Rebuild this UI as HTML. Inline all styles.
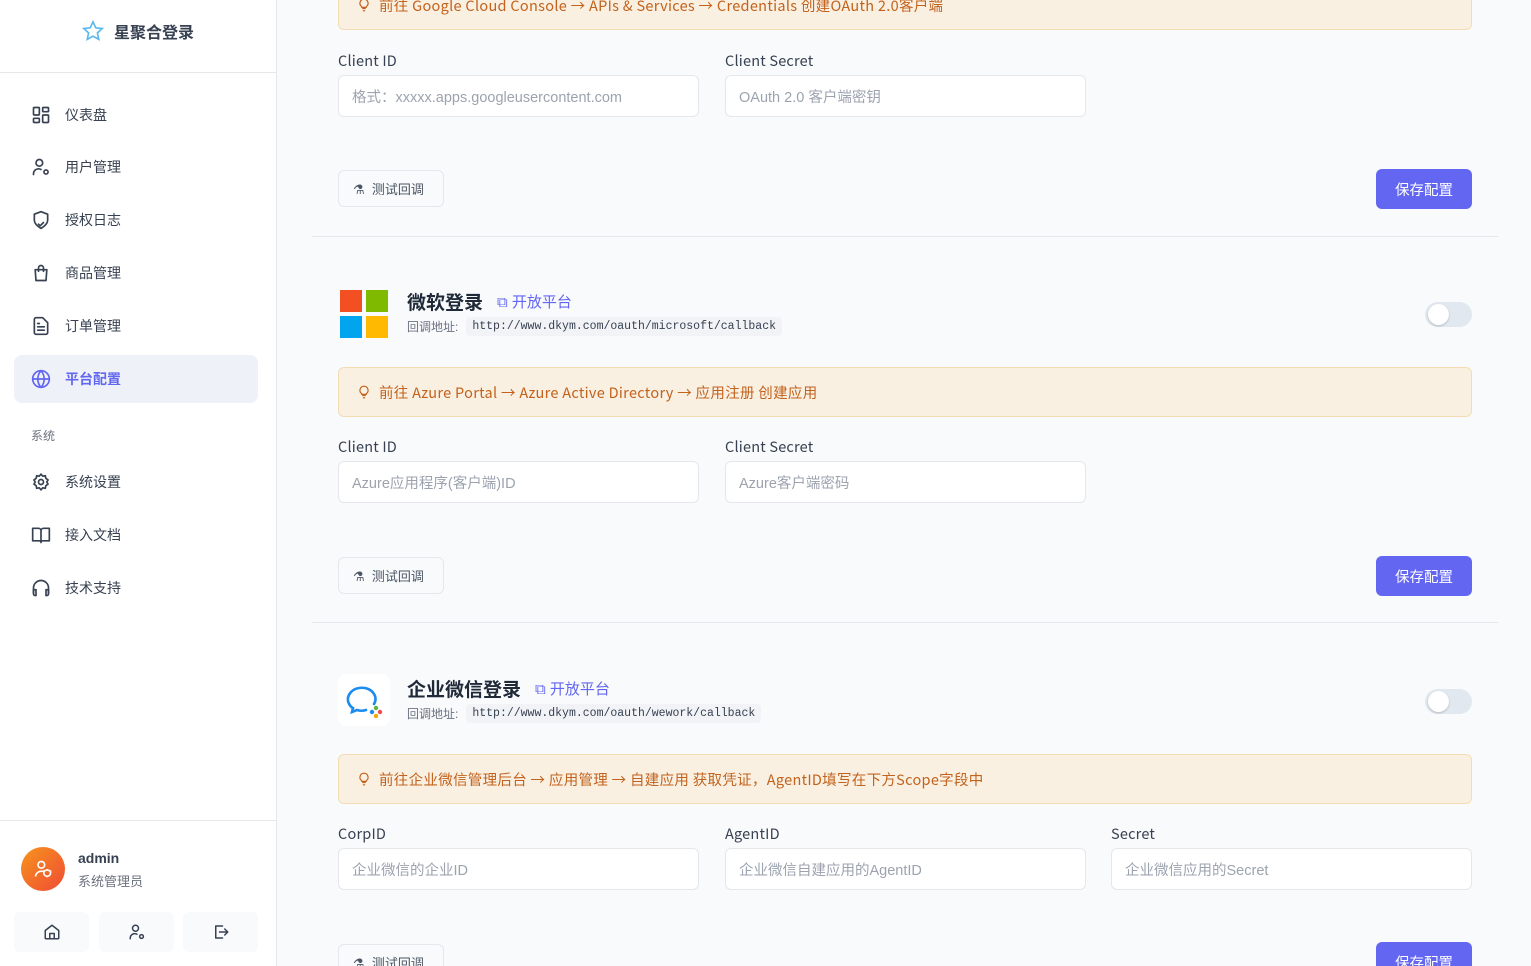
<!DOCTYPE html>
<html><head><meta charset="utf-8">
<style>
*{box-sizing:border-box;margin:0;padding:0}
html{width:1531px;height:966px;overflow:hidden}
body{width:1531px;height:966px;overflow:hidden;background:#f8fafc;font-family:"Liberation Sans","Noto Sans CJK SC",sans-serif;position:relative;color:#374151}
.a{position:absolute}
.side{left:0;top:0;width:277px;height:966px;background:#fff;border-right:1px solid #e5e7eb}
.nav{left:14px;width:244px;height:48px;display:flex;align-items:center;padding-left:17px;font-size:14px;color:#374151}
.nav svg{width:20px;height:20px;margin-right:14px;stroke:#374151;fill:none;stroke-width:2;stroke-linecap:round;stroke-linejoin:round}
.nav.act{background:#eef2f8;border-radius:8px;color:#6366f1;font-weight:bold}
.nav.act svg{stroke:#6366f1}
.lbl{font-family:"Noto Sans CJK SC",sans-serif;font-size:14.5px;color:#374151;letter-spacing:.2px}
.inp{height:42px;background:#fff;border:1px solid #e5e7eb;border-radius:6px;font-size:14.5px;color:#9ca3af;padding-left:13px;display:flex;align-items:center}
.alert{left:338px;width:1134px;height:50px;background:#faf0e2;border:1px solid #f3dcb4;border-radius:6px;font-family:"Noto Sans CJK SC",sans-serif;font-size:14.5px;color:#c2621c;display:flex;align-items:center;padding-left:18px;letter-spacing:.3px}
.alert svg{margin-right:8px}
.tbtn{left:338px;width:106px;height:37px;border:1px solid #e5e7eb;border-radius:6px;background:#f8fafc;font-size:13px;color:#4b5563;display:flex;align-items:center;padding-left:14px}
.sbtn{left:1376px;width:96px;height:40px;background:#6366f1;border-radius:6px;color:#fff;font-size:14.5px;display:flex;align-items:center;justify-content:center}
.hr{left:312px;width:1186px;height:1px;background:#e5e7eb}
.title{font-size:19px;font-weight:bold;color:#1f2937}
.link{font-size:15px;color:#6366f1}
.cb{font-size:12px;color:#6b7280;display:flex;align-items:center}
.cb code{font-family:"Liberation Mono",monospace;font-size:11.5px;color:#374151;background:#f1f3f7;border-radius:4px;padding:3px 6px;margin-left:8px}
.tog{left:1425px;width:47px;height:25px;border-radius:13px;background:#e2e8f0}
.tog:after{content:"";position:absolute;left:3px;top:2px;width:21px;height:21px;border-radius:50%;background:#fff;box-shadow:0 1px 2px rgba(0,0,0,.2)}
.bb{width:75px;height:40px;background:#f8fafc;border-radius:6px;top:912px;display:flex;align-items:center;justify-content:center}
.bb svg{width:18px;height:18px;fill:none;stroke:#374151;stroke-width:2;stroke-linecap:round;stroke-linejoin:round}
</style></head><body>
<div class="a side">
  <div class="a" style="left:82px;top:19px;display:flex;align-items:center">
    <svg width="22" height="22" viewBox="0 0 24 24" fill="none" stroke="#5ab8ee" stroke-width="1.8"><path d="M12 2l3 6.5 7 .8-5.2 4.8 1.5 7L12 17.6 5.7 21.1l1.5-7L2 9.3l7-.8z"/></svg>
    <span style="margin-left:10px;font-size:16px;font-weight:bold;color:#374151">星聚合登录</span>
  </div>
  <div class="a" style="left:0;top:72px;width:277px;height:1px;background:#e5e7eb"></div>
  <div class="a nav" style="top:91px"><svg viewBox="0 0 24 24"><rect x="3" y="3" width="7" height="9" rx="1"/><rect x="14" y="3" width="7" height="5" rx="1"/><rect x="14" y="12" width="7" height="9" rx="1"/><rect x="3" y="16" width="7" height="5" rx="1"/></svg>仪表盘</div>
  <div class="a nav" style="top:143px"><svg viewBox="0 0 24 24"><circle cx="10" cy="7" r="4"/><path d="M3 21v-1a6 6 0 0 1 9-5"/><circle cx="18" cy="18" r="2.5"/></svg>用户管理</div>
  <div class="a nav" style="top:196px"><svg viewBox="0 0 24 24"><path d="M12 22s8-4 8-10V5l-8-3-8 3v7c0 6 8 10 8 10"/><path d="M9 17l2 2 4-4"/></svg>授权日志</div>
  <div class="a nav" style="top:249px"><svg viewBox="0 0 24 24"><path d="M5 8h14l-1 13H6z"/><path d="M9 10V6a3 3 0 0 1 6 0v4"/></svg>商品管理</div>
  <div class="a nav" style="top:302px"><svg viewBox="0 0 24 24"><path d="M14 2H6a2 2 0 0 0-2 2v16a2 2 0 0 0 2 2h12a2 2 0 0 0 2-2V8z"/><path d="M8 13h8M8 17h8M8 9h2"/></svg>订单管理</div>
  <div class="a nav act" style="top:355px"><svg viewBox="0 0 24 24"><circle cx="12" cy="12" r="10"/><path d="M2 12h20M12 2a15 15 0 0 1 0 20M12 2a15 15 0 0 0 0 20"/></svg>平台配置</div>
  <div class="a" style="left:31px;top:427px;font-size:12px;color:#6b7280">系统</div>
  <div class="a nav" style="top:458px"><svg viewBox="0 0 24 24"><circle cx="12" cy="12" r="3"/><path d="M12 2.5l2 2.5 3.2-.6.6 3.2 2.7 1.9-1.6 2.5 1.6 2.5-2.7 1.9-.6 3.2-3.2-.6-2 2.5-2-2.5-3.2.6-.6-3.2-2.7-1.9 1.6-2.5-1.6-2.5 2.7-1.9.6-3.2 3.2.6z"/></svg>系统设置</div>
  <div class="a nav" style="top:511px"><svg viewBox="0 0 24 24"><path d="M2 4h7a3 3 0 0 1 3 3v14a2 2 0 0 0-2-2H2zM22 4h-7a3 3 0 0 0-3 3v14a2 2 0 0 1 2-2h8z"/></svg>接入文档</div>
  <div class="a nav" style="top:564px"><svg viewBox="0 0 24 24"><path d="M3 18v-6a9 9 0 0 1 18 0v6"/><path d="M21 19a2 2 0 0 1-2 2h-1v-7h3zM3 19a2 2 0 0 0 2 2h1v-7H3z"/></svg>技术支持</div>
  <div class="a" style="left:0;top:820px;width:277px;height:1px;background:#e5e7eb"></div>
  <div class="a" style="left:21px;top:847px;width:44px;height:44px;border-radius:50%;background:linear-gradient(135deg,#f7941d,#ef4b35);display:flex;align-items:center;justify-content:center">
    <svg width="20" height="20" viewBox="0 0 24 24" fill="none" stroke="#fff" stroke-width="2"><circle cx="10" cy="7" r="4"/><path d="M3 21a7 7 0 0 1 9-6"/><path d="M17 13l4 1.5v3c0 2-4 3.5-4 3.5s-4-1.5-4-3.5v-3z"/></svg>
  </div>
  <div class="a" style="left:78px;top:850px;font-size:14px;color:#374151;font-weight:bold">admin</div>
  <div class="a" style="left:78px;top:871px;font-size:13px;color:#6b7280">系统管理员</div>
  <div class="a bb" style="left:14px"><svg viewBox="0 0 24 24"><path d="M3 10l9-7 9 7v10a1 1 0 0 1-1 1H4a1 1 0 0 1-1-1z"/><path d="M9 21v-7h6v7"/></svg></div>
  <div class="a bb" style="left:99px"><svg viewBox="0 0 24 24"><circle cx="10" cy="7" r="4"/><path d="M3 21v-1a6 6 0 0 1 9-5"/><circle cx="18" cy="18" r="2.5"/></svg></div>
  <div class="a bb" style="left:183px"><svg viewBox="0 0 24 24"><path d="M14 4H5v16h9"/><path d="M10 12h11M17 8l4 4-4 4"/></svg></div>
</div>

<div class="a alert" style="top:-20px"><svg width="14" height="14" viewBox="0 0 24 24" fill="none" stroke="#c2621c" stroke-width="2"><path d="M9 18h6M10 22h4M12 2a7 7 0 0 0-4 12.7V16h8v-1.3A7 7 0 0 0 12 2z"/></svg>前往 Google Cloud Console → APIs &amp; Services → Credentials 创建OAuth 2.0客户端</div>
<div class="a lbl" style="left:338px;top:50px">Client ID</div>
<div class="a lbl" style="left:725px;top:50px">Client Secret</div>
<div class="a inp" style="left:338px;top:75px;width:361px">格式：xxxxx.apps.googleusercontent.com</div>
<div class="a inp" style="left:725px;top:75px;width:361px">OAuth 2.0 客户端密钥</div>
<div class="a tbtn" style="top:170px">⚗&nbsp; 测试回调</div>
<div class="a sbtn" style="top:169px">保存配置</div>
<div class="a hr" style="top:236px"></div>

<div class="a" style="left:340px;top:290px;width:48px;height:48px">
  <div class="a" style="left:0;top:0;width:22px;height:22px;background:#f25022"></div>
  <div class="a" style="left:26px;top:0;width:22px;height:22px;background:#7fba00"></div>
  <div class="a" style="left:0;top:26px;width:22px;height:22px;background:#00a4ef"></div>
  <div class="a" style="left:26px;top:26px;width:22px;height:22px;background:#ffb900"></div>
</div>
<div class="a" style="left:407px;top:288px;display:flex;align-items:center"><span class="title">微软登录</span><span class="link" style="margin-left:14px">⧉ 开放平台</span></div>
<div class="a cb" style="left:407px;top:317px">回调地址:<code>http://www.dkym.com/oauth/microsoft/callback</code></div>
<div class="a tog" style="top:302px"></div>
<div class="a alert" style="top:367px"><svg width="14" height="14" viewBox="0 0 24 24" fill="none" stroke="#c2621c" stroke-width="2"><path d="M9 18h6M10 22h4M12 2a7 7 0 0 0-4 12.7V16h8v-1.3A7 7 0 0 0 12 2z"/></svg>前往 Azure Portal → Azure Active Directory → 应用注册 创建应用</div>
<div class="a lbl" style="left:338px;top:436px">Client ID</div>
<div class="a lbl" style="left:725px;top:436px">Client Secret</div>
<div class="a inp" style="left:338px;top:461px;width:361px">Azure应用程序(客户端)ID</div>
<div class="a inp" style="left:725px;top:461px;width:361px">Azure客户端密码</div>
<div class="a tbtn" style="top:557px">⚗&nbsp; 测试回调</div>
<div class="a sbtn" style="top:556px">保存配置</div>
<div class="a hr" style="top:622px"></div>

<div class="a" style="left:338px;top:674px;width:52px;height:52px;background:#fff;border-radius:8px">
  <svg width="52" height="52" viewBox="0 0 52 52" fill="none"><path d="M36 30c2-3 2-7 0-10-3-5-9-7-15-6-7 1-12 7-11 13 1 4 3 6 5 7l-1 4 5-2c3 1 6 1 9 0" stroke="#1c8cf0" stroke-width="2.6" stroke-linecap="round"/><circle cx="38" cy="34" r="2.2" fill="#5bb73a"/><circle cx="42" cy="38" r="2.2" fill="#f14c4c"/><circle cx="38" cy="42" r="2.2" fill="#f7a800"/><circle cx="34" cy="38" r="2.2" fill="#1c8cf0"/></svg>
</div>
<div class="a" style="left:407px;top:675px;display:flex;align-items:center"><span class="title">企业微信登录</span><span class="link" style="margin-left:14px">⧉ 开放平台</span></div>
<div class="a cb" style="left:407px;top:704px">回调地址:<code>http://www.dkym.com/oauth/wework/callback</code></div>
<div class="a tog" style="top:689px"></div>
<div class="a alert" style="top:754px"><svg width="14" height="14" viewBox="0 0 24 24" fill="none" stroke="#c2621c" stroke-width="2"><path d="M9 18h6M10 22h4M12 2a7 7 0 0 0-4 12.7V16h8v-1.3A7 7 0 0 0 12 2z"/></svg>前往企业微信管理后台 → 应用管理 → 自建应用 获取凭证，AgentID填写在下方Scope字段中</div>
<div class="a lbl" style="left:338px;top:823px">CorpID</div>
<div class="a lbl" style="left:725px;top:823px">AgentID</div>
<div class="a lbl" style="left:1111px;top:823px">Secret</div>
<div class="a inp" style="left:338px;top:848px;width:361px">企业微信的企业ID</div>
<div class="a inp" style="left:725px;top:848px;width:361px">企业微信自建应用的AgentID</div>
<div class="a inp" style="left:1111px;top:848px;width:361px">企业微信应用的Secret</div>
<div class="a tbtn" style="top:944px">⚗&nbsp; 测试回调</div>
<div class="a sbtn" style="top:942px">保存配置</div>
</body></html>
